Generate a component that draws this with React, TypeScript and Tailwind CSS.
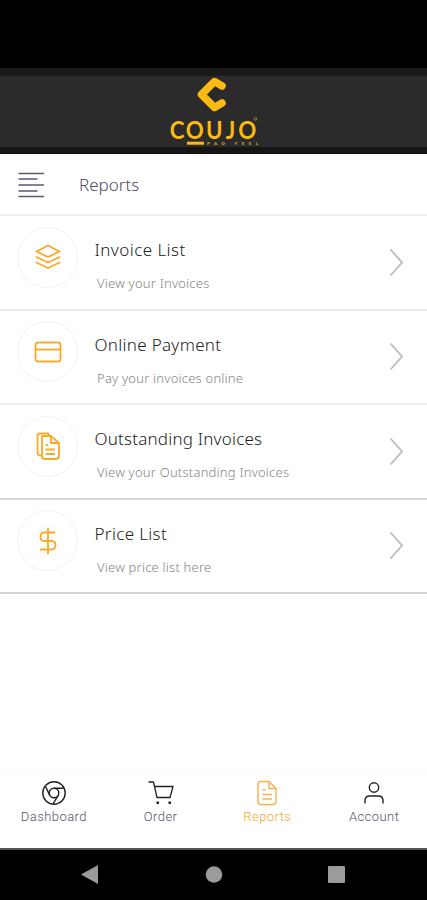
import { ReactNode } from 'react'

type Report = {
  title: string
  subtitle: string
  icon: ReactNode
  border: string
  spacing: string
}

const reports: Report[] = [
  { title: 'Invoice List', subtitle: 'View your Invoices', icon: <LayersIcon />, border: 'border-[#e9e9e9]', spacing: 'tracking-[0.45px]' },
  { title: 'Online Payment', subtitle: 'Pay your invoices online', icon: <CardIcon />, border: 'border-[#eeeeee]', spacing: 'tracking-[0.3px]' },
  { title: 'Outstanding Invoices', subtitle: 'View your Outstanding Invoices', icon: <DocumentsIcon />, border: 'border-[#d6d6d6]', spacing: 'tracking-[0.2px]' },
  { title: 'Price List', subtitle: 'View price list here', icon: <DollarIcon />, border: 'border-[#d6d6d6]', spacing: 'tracking-[0.35px]' },
]

export default function App() {
  return (
    <div className="flex h-[900px] w-[427px] flex-col overflow-hidden bg-white font-['Noto_Sans',sans-serif]">
      <div className="h-[68px] shrink-0 bg-black" />
      <BrandBar />
      <header className="flex h-[62px] shrink-0 items-center border-b-2 border-[#f0f0f0] pt-[2px] pl-[18px]">
        <MenuIcon />
        <h1 className="ml-[35px] text-[17px] leading-6 font-light text-[#504c64]">Reports</h1>
      </header>
      <main className="flex-1">
        {reports.map(r => <ReportRow key={r.title} report={r} />)}
      </main>
      <TabBar />
      <SystemBar />
    </div>
  )
}

function BrandBar() {
  return (
    <div className="flex h-[86px] shrink-0 justify-center border-t-8 border-b-[7px] border-t-[#1c1a1b] border-b-[#151515] bg-[#2b2b2b]">
      <svg width="100" height="71" viewBox="164 76 100 71" fill="none">
        <path d="M222 86L214.500 81.500L201.500 94.500L214.500 107.500L222 103" stroke="#fcba12" strokeWidth="7.500" strokeLinejoin="round" strokeLinecap="round" />
        <text transform="translate(170 138.500) scale(0.93 1)" x="-0.200 16.900 38.700 60 73.400" y="0" fontSize="24" fontWeight="700" fill="#fcba12" fontFamily="Lato, sans-serif">COUJO</text>
        <circle cx="255.500" cy="119" r="1.300" stroke="#b18418" strokeWidth="1" />
        <path d="M187 143.200H204" stroke="#fcba12" strokeWidth="3" />
        <text x="207" y="144.800" textLength="51" lengthAdjust="spacing" fontSize="4.500" fontWeight="900" fill="#d9a415" fontFamily="Lato, sans-serif">PAD FEEL</text>
      </svg>
    </div>
  )
}

function ReportRow({ report }: { report: Report }) {
  return (
    <section className={`flex h-[94.500px] items-start border-b-2 pt-[10.800px] pl-[17px] ${report.border}`}>
      <div className="flex size-[61px] shrink-0 items-center justify-center rounded-full border border-[#f0f0f0]">
        {report.icon}
      </div>
      <div className="ml-[17px] flex-1 pt-[11.600px]">
        <h2 className={`-ml-[0.500px] text-[17px] leading-6 font-light whitespace-nowrap text-[#222222] ${report.spacing}`}>{report.title}</h2>
        <p className="mt-[12px] ml-[2px] text-[13px] leading-[18px] font-light tracking-[0.22px] whitespace-nowrap text-[#858585]">{report.subtitle}</p>
      </div>
      <svg className="mt-[21px] mr-[23px]" width="15" height="29" viewBox="0 0 15 29" fill="none" stroke="#b9babd" strokeWidth="1.800">
        <path d="M1.500 1.500L13 14.500L1.500 27.500" />
      </svg>
    </section>
  )
}

function TabBar() {
  return (
    <nav className="grid h-[78px] shrink-0 grid-cols-4 border-t border-[#fbfbfb] pt-[9px]">
      <Tab label="Dashboard"><ChromeIcon /></Tab>
      <Tab label="Order"><CartIcon /></Tab>
      <Tab label="Reports" active><FileIcon /></Tab>
      <Tab label="Account"><UserIcon /></Tab>
    </nav>
  )
}

function Tab({ label, active, children }: { label: string; active?: boolean; children: ReactNode }) {
  return (
    <div className="flex flex-col items-center pl-px">
      {children}
      <span className={`mt-[2px] font-[Roboto,sans-serif] text-[13px] leading-[18px] font-light tracking-[0.45px] ${active ? 'text-[#f8a52c]' : 'text-[#565269]'}`}>
        {label}
      </span>
    </div>
  )
}

function SystemBar() {
  return (
    <div className="flex h-[52px] shrink-0 items-center border-t-2 border-[#555555] bg-black">
      <svg width="427" height="50" viewBox="0 850 427 50" fill="#9b9b9b">
        <path d="M81 874.500L98 865V884Z" />
        <circle cx="214" cy="874.500" r="8.300" />
        <rect x="328" y="866" width="17" height="17" rx="1" />
      </svg>
    </div>
  )
}

function MenuIcon() {
  return (
    <svg width="26" height="28" viewBox="0 0 26 28" stroke="#5c5872" strokeWidth="1.700">
      <path d="M0.500 2.500H26M0.500 8H19.500M0.500 14H26M0.500 20H19.500M0.500 25.500H26" />
    </svg>
  )
}

function LayersIcon() {
  return (
    <svg width="26" height="26" viewBox="0 0 26 26" fill="none" stroke="#f9a928" strokeWidth="1.900" strokeLinejoin="round" strokeLinecap="round">
      <path d="M13 1.500L24.500 7.500L13 13L1.500 7.500Z" />
      <path d="M1.500 13L13 18.500L24.500 13M1.500 18.500L13 24L24.500 18.500" />
    </svg>
  )
}

function CardIcon() {
  return (
    <svg width="28" height="22" viewBox="0 0 28 22" fill="none" stroke="#f9a928" strokeWidth="1.800">
      <rect x="1.500" y="1.500" width="25" height="19" rx="2.500" />
      <path d="M2 8.500H26" />
    </svg>
  )
}

function DocumentsIcon() {
  return (
    <svg width="26" height="28" viewBox="0 0 26 28" fill="none" stroke="#f9a928" strokeWidth="1.800" strokeLinejoin="round">
      <path d="M6 23.500H5Q2.500 23 2.500 20V4Q2.500 1.500 5 1.500H13L15 4" />
      <path d="M7 4H16L24 11V24Q24 27 21 27H10Q7 27 7 24Z" />
      <path d="M16 4V11H24" />
      <path d="M10.500 13H13M10.500 17.500H20M10.500 22H20" />
    </svg>
  )
}

function DollarIcon() {
  return (
    <svg width="20" height="28" viewBox="0 0 20 28" fill="none" stroke="#f9a928" strokeWidth="1.800" strokeLinecap="round">
      <path d="M10 1.500V26.500M16.500 5.500H6.500Q2.500 5.500 2.500 9.700T6.500 14H13Q17.500 14 17.500 18.200T13 22.500H2.500" />
    </svg>
  )
}

function ChromeIcon() {
  return (
    <svg width="26" height="26" viewBox="0 0 26 26" fill="none" stroke="#222222" strokeWidth="1.400">
      <circle cx="13" cy="13" r="11.200" />
      <circle cx="13" cy="13" r="4.800" />
      <path d="M13 8.200H22.800M8.800 15.400L4.500 6.500M17.200 15.400L12 24" />
    </svg>
  )
}

function CartIcon() {
  return (
    <svg width="26" height="26" viewBox="0 0 26 26" fill="none" stroke="#222222" strokeWidth="1.300" strokeLinejoin="round">
      <path d="M0.500 2H5.500L9 17.500H22L25 6.500H6.500" />
      <path d="M8.500 21.500H11V24H8.500ZM20.500 21.500H23V24H20.500Z" fill="#222222" stroke="none" />
    </svg>
  )
}

function FileIcon() {
  return (
    <svg width="26" height="26" viewBox="0 0 26 26" fill="none" stroke="#f9b04a" strokeWidth="1.400" strokeLinejoin="round">
      <path d="M6.500 1.500H15L22 8.500V21.500Q22 24.500 19 24.500H6.500Q4 24.500 4 21.500V4.500Q4 1.500 6.500 1.500Z" />
      <path d="M15 1.500V8.500H22M8.500 10H11.500M8.500 14.500H18M8.500 19H18" />
    </svg>
  )
}

function UserIcon() {
  return (
    <svg width="26" height="26" viewBox="0 0 26 26" fill="none" stroke="#222222" strokeWidth="1.400">
      <circle cx="13" cy="7.500" r="4.700" />
      <path d="M4 23.500V20.500Q4 16 8.500 16H17.500Q22 16 22 20.500V23.500" />
    </svg>
  )
}
